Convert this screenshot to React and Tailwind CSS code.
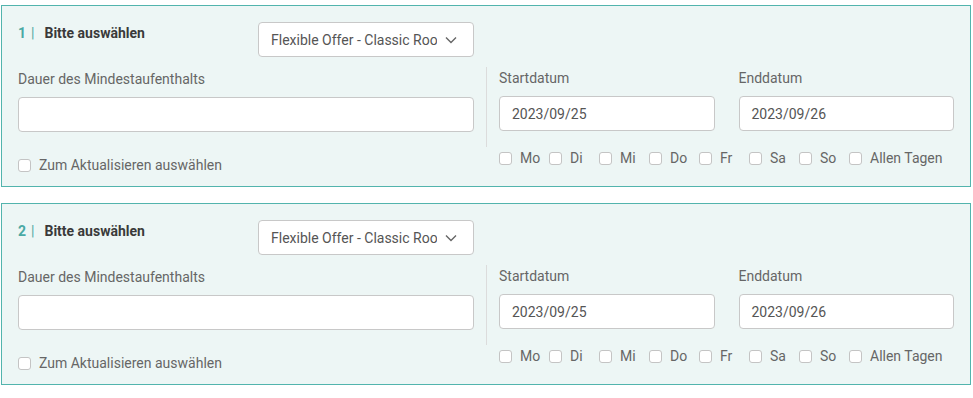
import React from 'react';

const days = ['Mo', 'Di', 'Mi', 'Do', 'Fr', 'Sa', 'So'];

const Box = () => (
  <span className="inline-block w-[13px] h-[13px] rounded-[3px] border border-[#c4c4c4] bg-white shrink-0" />
);

const OfferPanel = ({ index }) => {
  return (
    <div className="w-[970px] h-[182px] box-border border border-[#52b4ad] bg-[#edf6f5] px-4 pt-4">
      <div className="flex">
        {/* left column */}
        <div className="w-[456px] shrink-0">
          <div className="flex justify-between items-start">
            <div className="mt-px flex items-center h-5 text-sm">
              <span className="font-bold text-[#4aa9a4]">{index}</span>
              <span className="ml-[5px] text-[#4aa9a4]">|</span>
              <span className="ml-[10px] font-bold text-[#3a3a3a]">Bitte auswählen</span>
            </div>
            <div className="w-[216px] h-[35px] box-border border border-[#c8c8c8] rounded bg-white flex items-center pl-3 pr-4">
              <span className="w-[166px] overflow-hidden whitespace-nowrap text-sm text-[#555]">
                Flexible Offer - Classic Room
              </span>
              <svg className="ml-auto" width="12" height="8" viewBox="0 0 12 8" fill="none">
                <path d="M1 1.5l5 5 5-5" stroke="#666" strokeWidth="1.4" />
              </svg>
            </div>
          </div>
          <div className="mt-3 h-5 leading-5 text-sm text-[#666]">Dauer des Mindestaufenthalts</div>
          <div className="mt-2 h-[35px] box-border border border-[#c8c8c8] rounded bg-white" />
          <label className="mt-[23px] h-5 flex items-center gap-2 text-sm text-[#666]">
            <Box />
            Zum Aktualisieren auswählen
          </label>
        </div>

        {/* divider */}
        <div className="mx-3 mt-[45px] w-px h-[80px] bg-[#dcdcdc] shrink-0" />

        {/* right column */}
        <div className="flex-1 mt-[46px]">
          <div className="grid grid-cols-2 gap-6">
            <div>
              <div className="h-5 leading-5 text-sm text-[#666]">Startdatum</div>
              <div className="mt-2 h-[35px] box-border border border-[#c8c8c8] rounded bg-white flex items-center px-3 text-sm text-[#555]">
                2023/09/25
              </div>
            </div>
            <div>
              <div className="h-5 leading-5 text-sm text-[#666]">Enddatum</div>
              <div className="mt-2 h-[35px] box-border border border-[#c8c8c8] rounded bg-white flex items-center px-3 text-sm text-[#555]">
                2023/09/26
              </div>
            </div>
          </div>
          <div className="mt-[17px] h-5 flex items-center text-sm text-[#666]">
            {days.map((d) => (
              <label key={d} className="w-[50px] flex items-center gap-2">
                <Box />
                {d}
              </label>
            ))}
            <label className="flex items-center gap-2">
              <Box />
              Allen Tagen
            </label>
          </div>
        </div>
      </div>
    </div>
  );
};

const App = () => {
  return (
    <div className="w-[973px] h-[398px] bg-white pt-[5px] pl-px flex flex-col gap-4 font-['Roboto',sans-serif]">
      <OfferPanel index={1} />
      <OfferPanel index={2} />
    </div>
  );
};

export default App;
